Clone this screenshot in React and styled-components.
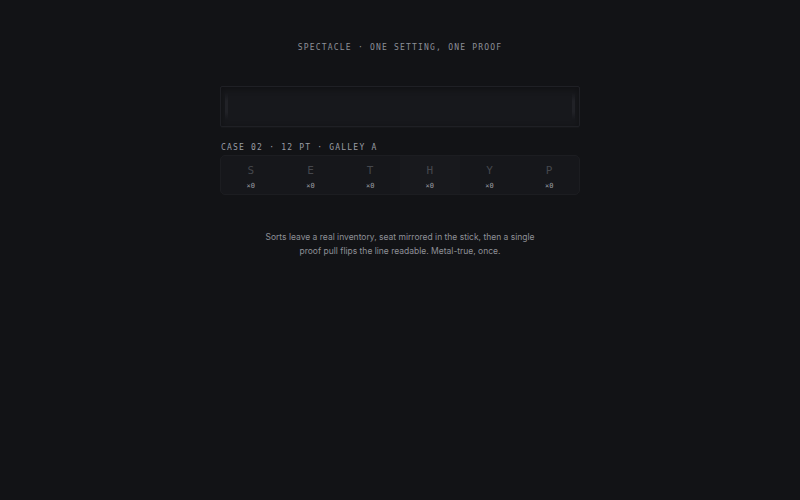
import React from "react";
import styled, { createGlobalStyle } from "styled-components";

const GlobalStyle = createGlobalStyle`
  html, body {
    margin: 0;
    background: #121316;
  }
  body {
    font-family: Inter, "Noto Sans", sans-serif;
    -webkit-font-smoothing: antialiased;
  }
`;

const Page = styled.main`
  display: flex;
  flex-direction: column;
  align-items: center;
  min-height: 500px;
  padding-top: 42px;
  box-sizing: border-box;
`;

const Title = styled.h1`
  margin: 0 0 32px;
  font-family: "DejaVu Sans Mono", "Liberation Mono", monospace;
  font-weight: 400;
  font-size: 8px;
  line-height: 12px;
  letter-spacing: 1.2px;
  color: #8c8f96;
`;

const Column = styled.div`
  width: 360px;
  display: flex;
  flex-direction: column;
`;

/* composing stick: an empty inset tray with two jaws */
const Stick = styled.div`
  height: 41px;
  box-sizing: border-box;
  display: flex;
  justify-content: space-between;
  align-items: center;
  padding: 0 4px;
  background: #17181c;
  border: 1px solid #1f2025;
  border-radius: 2px;
  box-shadow: inset 0 2px 6px rgba(0, 0, 0, 0.35), 0 1px 0 rgba(255, 255, 255, 0.02);
`;

const Jaw = styled.span`
  width: 3px;
  height: 27px;
  background: linear-gradient(to bottom, transparent, #212227 30%, #212227 70%, transparent);
`;

const Label = styled.div`
  margin: 15px 0 1px 1px;
  font-family: "DejaVu Sans Mono", "Liberation Mono", monospace;
  font-size: 8px;
  line-height: 12px;
  letter-spacing: 1.2px;
  color: #9a9da4;
`;

const Case = styled.div`
  display: grid;
  grid-template-columns: repeat(6, 1fr);
  height: 40px;
  box-sizing: border-box;
  background: #16171b;
  border: 1px solid #1c1d21;
  border-radius: 5px;
  overflow: hidden;
`;

const Compartment = styled.div`
  display: flex;
  flex-direction: column;
  align-items: center;
  justify-content: center;
  gap: 3px;
  padding-top: 5px;
  background: ${(p) => (p.$lit ? "#18191d" : "transparent")};
`;

const Sort = styled.span`
  font-family: "DejaVu Sans Mono", "Liberation Mono", monospace;
  font-size: 11px;
  line-height: 14px;
  color: #45474d;
`;

const Count = styled.span`
  font-family: "DejaVu Sans Mono", "Liberation Mono", monospace;
  font-size: 7px;
  line-height: 10px;
  color: #9a9ca2;
`;

const Note = styled.p`
  margin: 35px 0 0;
  width: 280px;
  text-align: center;
  font-size: 8.5px;
  line-height: 14px;
  color: #8e9096;
`;

const sorts = ["S", "E", "T", "H", "Y", "P"];

export default function App() {
  return (
    <>
      <GlobalStyle />
      <Page>
        <Title>SPECTACLE · ONE SETTING, ONE PROOF</Title>
        <Column>
          <Stick>
            <Jaw />
            <Jaw />
          </Stick>
          <Label>CASE 02 · 12 PT · GALLEY A</Label>
          <Case>
            {sorts.map((s, i) => (
              <Compartment key={s} $lit={i === 3}>
                <Sort>{s}</Sort>
                <Count>×0</Count>
              </Compartment>
            ))}
          </Case>
        </Column>
        <Note>
          Sorts leave a real inventory, seat mirrored in the stick, then a single proof pull flips
          the line readable. Metal-true, once.
        </Note>
      </Page>
    </>
  );
}
